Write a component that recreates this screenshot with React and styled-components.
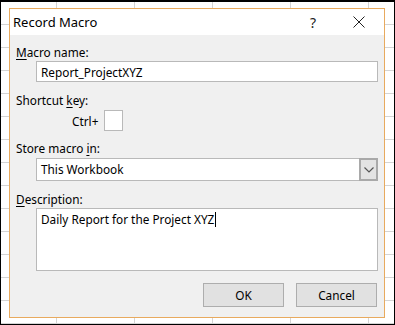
import styled, { createGlobalStyle } from "styled-components";

const GlobalStyle = createGlobalStyle`
  html, body {
    margin: 0;
    padding: 0;
    background: #ffffff;
  }
  * {
    box-sizing: border-box;
  }
`;

function App() {
  return (
    <>
      <GlobalStyle />
      <Screen>
        <Dialog>
          <TitleBar>
            <Title>Record Macro</Title>
            <TitleButton aria-label="Help">?</TitleButton>
            <TitleButton aria-label="Close">
              <svg width="12" height="12" viewBox="0 0 12 12">
                <path d="M0.5 0.5 L11.5 11.5 M11.5 0.5 L0.5 11.5" stroke="#222" strokeWidth="1" />
              </svg>
            </TitleButton>
          </TitleBar>
          <Body>
            <Label>
              <u>M</u>acro name:
            </Label>
            <TextBox $height={21} $gap={1}>Report_ProjectXYZ</TextBox>

            <Label $gap={10}>
              Shortcut <u>k</u>ey:
            </Label>
            <ShortcutRow>
              <span>Ctrl+</span>
              <KeyBox />
            </ShortcutRow>

            <Label $gap={9}>
              Store macro <u>i</u>n:
            </Label>
            <Select>
              <SelectText>This Workbook</SelectText>
              <DropButton>
                <svg width="10" height="6" viewBox="0 0 10 6">
                  <path d="M0.5 0.5 L5 5 L9.5 0.5" fill="none" stroke="#555" strokeWidth="1.2" />
                </svg>
              </DropButton>
            </Select>

            <Label $gap={10}>
              <u>D</u>escription:
            </Label>
            <TextBox $height={63} $gap={1}>
              Daily Report for the Project XYZ
              <Caret />
            </TextBox>

            <ButtonRow>
              <Button>OK</Button>
              <Button>Cancel</Button>
            </ButtonRow>
          </Body>
        </Dialog>
      </Screen>
    </>
  );
}

const Screen = styled.div`
  width: 395px;
  height: 325px;
  border: 1px solid #000;
  border-top-width: 2px;
  padding: 6px 0 0 8px;
  background-color: #ffffff;
  background-image:
    repeating-linear-gradient(
      to bottom,
      transparent 0,
      transparent 22px,
      #d4d4d4 22px,
      #d4d4d4 23px
    ),
    repeating-linear-gradient(
      to right,
      transparent 0,
      transparent 55px,
      #d4d4d4 55px,
      #d4d4d4 56px,
      transparent 56px,
      transparent 78px
    );
  font-family: "Noto Sans", "Open Sans", sans-serif;
  font-size: 11.8px;
  color: #000;
  overflow: hidden;
`;

const Dialog = styled.div`
  width: 376px;
  height: 310px;
  border: 1px solid #e8aa5e;
  background: #f0f0f0;
  display: flex;
  flex-direction: column;
`;

const TitleBar = styled.div`
  height: 26px;
  background: #ffffff;
  display: flex;
  align-items: center;
  padding-left: 3px;
  padding-right: 2px;
`;

const Title = styled.div`
  flex: 1;
  font-size: 13px;
  color: #000;
`;

const TitleButton = styled.div`
  width: 46px;
  display: flex;
  align-items: center;
  justify-content: center;
  font-size: 14px;
  color: #222;
`;

const Body = styled.div`
  flex: 1;
  display: flex;
  flex-direction: column;
  padding: 9px 6px 0 6px;
`;

const Label = styled.div`
  height: 16px;
  line-height: 16px;
  margin-top: ${(p) => p.$gap || 0}px;
  white-space: nowrap;

  u {
    text-decoration-thickness: 1px;
    text-underline-offset: 2px;
  }
`;

const TextBox = styled.div`
  margin: ${(p) => p.$gap}px 0 0 20px;
  height: ${(p) => p.$height}px;
  background: #ffffff;
  border: 1px solid #b9b9b9;
  padding: 1px 4px;
  line-height: 18px;
  white-space: nowrap;
`;

const Caret = styled.span`
  display: inline-block;
  width: 1px;
  height: 15px;
  margin-left: 1px;
  vertical-align: -3px;
  background: #000;
`;

const ShortcutRow = styled.div`
  margin: 2px 0 0 56px;
  display: flex;
  align-items: center;
  gap: 6px;
  height: 21px;
`;

const KeyBox = styled.div`
  width: 19px;
  height: 21px;
  background: #ffffff;
  border: 1px solid #b9b9b9;
`;

const Select = styled.div`
  margin: 2px 0 0 20px;
  height: 23px;
  display: flex;
  background: #ffffff;
  border: 1px solid #b9b9b9;
`;

const SelectText = styled.div`
  flex: 1;
  padding-left: 4px;
  line-height: 21px;
`;

const DropButton = styled.div`
  width: 19px;
  margin: -1px -1px -1px 0;
  border: 2px solid #a9a9a9;
  background: #e3e3e3;
  display: flex;
  align-items: center;
  justify-content: center;
`;

const ButtonRow = styled.div`
  margin-top: 12px;
  display: flex;
  justify-content: flex-end;
  gap: 12px;
  padding-right: 1px;
`;

const Button = styled.div`
  width: 81px;
  height: 24px;
  background: #e1e1e1;
  border: 1px solid #adadad;
  display: flex;
  align-items: center;
  justify-content: center;
`;

export default App;
